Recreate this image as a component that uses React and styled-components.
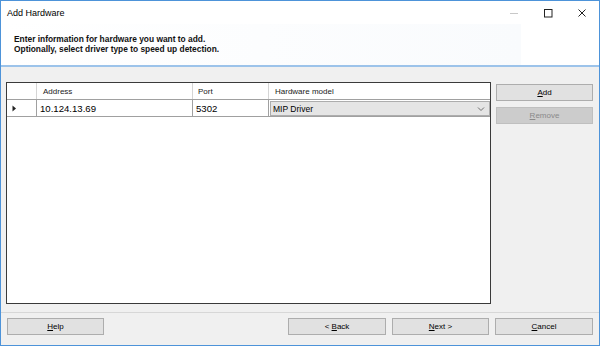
import React from "react";
import styled, { createGlobalStyle } from "styled-components";

const Global = createGlobalStyle`
  html, body { margin: 0; padding: 0; background: #f0f0f0; }
  * { box-sizing: border-box; }
`;

const Window = styled.div`
  width: 600px;
  height: 346px;
  border: 1px solid #4d93d9;
  background: #f0f0f0;
  display: flex;
  flex-direction: column;
  font-family: "Liberation Sans", Arial, sans-serif;
  color: #000;
  overflow: hidden;
`;

const TitleBar = styled.div`
  height: 23px;
  background: #fff;
  display: flex;
  align-items: center;
  padding-left: 6px;
`;

const Title = styled.div`
  flex: 1;
  font-size: 9px;
  color: #000;
`;

const CaptionButton = styled.div`
  width: 34px;
  height: 22px;
  display: flex;
  align-items: center;
  justify-content: center;
`;

const Header = styled.div`
  height: 43px;
  background: #fff;
  border-bottom: 2px solid #9cc3ea;
  display: flex;
`;

const HeaderText = styled.div`
  width: 520px;
  background: linear-gradient(to right, #fff, #f9fbfd);
  padding: 11px 0 0 13px;
  font-size: 8.4px;
  font-weight: bold;
  line-height: 9.5px;
  color: #111;
`;

const Body = styled.div`
  flex: 1;
  display: flex;
  gap: 5px;
  padding: 15px 6px 8px 5px;
`;

const GridBox = styled.div`
  flex: 1;
  background: #fff;
  border: 1px solid #3a3a3a;
`;

const GridRow = styled.div`
  display: grid;
  grid-template-columns: 30px 156px 76px 1fr;
  height: ${(p) => p.$h}px;
  border-bottom: 1px solid #a0a0a0;
`;

const HeadCell = styled.div`
  border-right: 1px solid #d5d5d5;
  font-size: 8px;
  padding-left: ${(p) => p.$pad || 6}px;
  display: flex;
  align-items: center;
  color: #1a1a1a;
  &:last-child { border-right: none; }
`;

const Cell = styled.div`
  border-right: 1px solid #a0a0a0;
  font-size: 9.6px;
  padding-left: 3px;
  display: flex;
  align-items: center;
  &:last-child { border-right: none; }
`;

const RowHeadCell = styled(Cell)`
  padding-left: 5px;
`;

const ComboCell = styled.div`
  margin: 1px 0 0 1px;
  background: #e5e5e5;
  border: 1px solid #adadad;
  display: flex;
  align-items: center;
  justify-content: space-between;
  font-size: 8.5px;
  padding: 0 4px 0 2px;
`;

const SideCol = styled.div`
  width: 97px;
  display: flex;
  flex-direction: column;
  gap: 6px;
  padding-top: 2px;
`;

const Button = styled.div`
  height: 17px;
  width: ${(p) => p.$w || 97}px;
  background: ${(p) => (p.$disabled ? "#cccccc" : "#e1e1e1")};
  border: 1px solid ${(p) => (p.$disabled ? "#bfbfbf" : "#adadad")};
  color: ${(p) => (p.$disabled ? "#8a8a8a" : "#000")};
  font-size: 8px;
  display: flex;
  align-items: center;
  justify-content: center;
  u { text-decoration: underline; text-underline-offset: 1px; }
`;

const Separator = styled.div`
  height: 1px;
  background: #d7d7d7;
`;

const Footer = styled.div`
  height: 32px;
  display: flex;
  align-items: flex-start;
  padding: 5px 6px 0 6px;
`;

const Spacer = styled.div`
  flex: 1;
`;

const FooterGroup = styled.div`
  display: flex;
  gap: 6px;
`;

export default function App() {
  return (
    <>
      <Global />
      <Window>
        <TitleBar>
          <Title>Add Hardware</Title>
          <CaptionButton>
            <svg width="10" height="10" viewBox="0 0 10 10">
              <line x1="1" y1="5.5" x2="9" y2="5.5" stroke="#c8c8c8" strokeWidth="1" />
            </svg>
          </CaptionButton>
          <CaptionButton>
            <svg width="10" height="10" viewBox="0 0 10 10">
              <rect x="1.5" y="1.5" width="7.5" height="7.5" fill="none" stroke="#222" strokeWidth="1" />
            </svg>
          </CaptionButton>
          <CaptionButton>
            <svg width="10" height="10" viewBox="0 0 10 10">
              <path d="M1.5 1.5 L8.5 8.5 M8.5 1.5 L1.5 8.5" stroke="#222" strokeWidth="1" />
            </svg>
          </CaptionButton>
        </TitleBar>
        <Header>
          <HeaderText>
            Enter information for hardware you want to add.
            <br />
            Optionally, select driver type to speed up detection.
          </HeaderText>
        </Header>
        <Body>
          <GridBox>
            <GridRow $h={17}>
              <HeadCell />
              <HeadCell>Address</HeadCell>
              <HeadCell $pad={5}>Port</HeadCell>
              <HeadCell>Hardware model</HeadCell>
            </GridRow>
            <GridRow $h={17}>
              <RowHeadCell>
                <svg width="5" height="7" viewBox="0 0 5 7">
                  <path d="M0.5 0.5 L4 3.5 L0.5 6.5 Z" fill="#222" />
                </svg>
              </RowHeadCell>
              <Cell>10.124.13.69</Cell>
              <Cell>5302</Cell>
              <ComboCell>
                <span>MIP Driver</span>
                <svg width="8" height="6" viewBox="0 0 8 6">
                  <path d="M1 1.5 L4 4.5 L7 1.5" fill="none" stroke="#707070" strokeWidth="1" />
                </svg>
              </ComboCell>
            </GridRow>
          </GridBox>
          <SideCol>
            <Button>
              <span><u>A</u>dd</span>
            </Button>
            <Button $disabled>
              <span><u>R</u>emove</span>
            </Button>
          </SideCol>
        </Body>
        <Separator />
        <Footer>
          <Button>
            <span><u>H</u>elp</span>
          </Button>
          <Spacer />
          <FooterGroup>
            <Button $w={98}>
              <span>&lt; <u>B</u>ack</span>
            </Button>
            <Button $w={97}>
              <span><u>N</u>ext &gt;</span>
            </Button>
            <Button $w={98}>
              <span><u>C</u>ancel</span>
            </Button>
          </FooterGroup>
        </Footer>
      </Window>
    </>
  );
}
